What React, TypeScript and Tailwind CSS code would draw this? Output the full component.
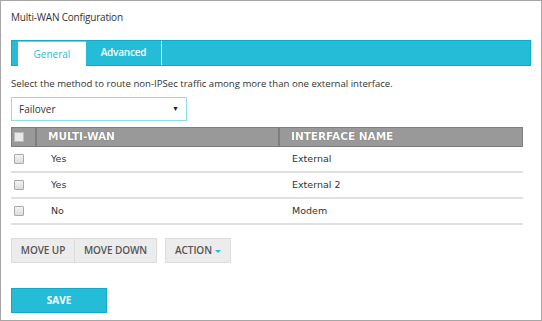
import React from "react";

const Check = ({ header = false }: { header?: boolean }) => (
  <span
    className={
      header
        ? "block w-[10px] h-[10px] border border-[#bbbbbb] bg-[#e8e8e8]"
        : "block w-[10px] h-[10px] rounded-[1px] border border-[#a9a9a9] bg-gradient-to-b from-[#f4f4f4] to-[#dcdcdc]"
    }
  />
);

const rows = [
  ["Yes", "External"],
  ["Yes", "External 2"],
  ["No", "Modem"],
];

export default function App() {
  return (
    <div
      className="w-[542px] h-[321px] border border-[#a6a6a6] bg-white pl-[10px] pr-[10px] text-[#333]"
      style={{ fontFamily: "'Open Sans', sans-serif" }}
    >
      <div className="pt-[10px] h-[39px] text-[10px] tracking-[-0.2px] leading-[13px] text-[#333]">Multi-WAN Configuration</div>
      <div className="flex h-[26px] w-[520px] border border-[#13aac8] bg-[#25bcd7]">
        <div className="ml-[6px] w-[68px] h-[25px] bg-white border-t border-[#6fd3e6] flex items-center justify-center text-[10px] text-[#25bcd7]">
          General
        </div>
        <div className="w-[76px] flex items-center justify-center text-[10px] tracking-[-0.2px] font-semibold text-white border-r border-white pb-[2px]">
          Advanced
        </div>
      </div>
      <div className="mt-[11px] text-[9.6px] leading-[14px] text-[#333]">
        Select the method to route non-IPSec traffic among more than one external interface.
      </div>
      <div className="mt-[6px] w-[176px] h-[24px] border border-[#8fdcea] flex items-center justify-between pl-[7px] pr-[7px] text-[10px] text-[#333]">
        <span>Failover</span>
        <span className="text-[7px] text-[#222]">▼</span>
      </div>
      <div className="mt-[6px] w-[512px]" style={{ fontFamily: "'DejaVu Sans', Verdana, sans-serif" }}>
        <div className="flex h-[20px] bg-[#999999] border border-[#7d7d7d] text-white text-[10.5px] font-bold">
          <div className="w-[25px] flex items-center pl-[2px] border-r-2 border-[#7d7d7d]">
            <Check header />
          </div>
          <div className="w-[243px] flex items-center pl-[11px] border-r-2 border-[#7d7d7d] [text-shadow:0_0_1px_#555]">MULTI-WAN</div>
          <div className="flex-1 flex items-center pl-[11px] [text-shadow:0_0_1px_#555]">INTERFACE NAME</div>
        </div>
        {rows.map(([a, b], i) => (
          <div key={i} className="flex h-[26px] border-b-2 border-[#e0e0e0] text-[9.5px] text-[#333] items-center">
            <div className="w-[26px] pl-[3px] flex items-center">
              <Check />
            </div>
            <div className="w-[243px] pl-[14px]">{a}</div>
            <div className="flex-1 pl-[12px]">{b}</div>
          </div>
        ))}
      </div>
      <div className="mt-[13px] flex h-[25px] text-[10px] tracking-[-0.1px] font-semibold text-[#555]">
        <div className="w-[64px] border border-[#dcdcdc] bg-[#ececec] flex items-center justify-center">MOVE UP</div>
        <div className="w-[82px] border border-l-0 border-[#dcdcdc] bg-[#ececec] flex items-center justify-center">MOVE DOWN</div>
        <div className="ml-[8px] w-[66px] border border-[#dcdcdc] bg-[#ececec] flex items-center justify-center gap-[3px]">
          ACTION
          <span className="inline-block w-0 h-0 border-l-[3px] border-r-[3px] border-t-[3px] border-l-transparent border-r-transparent border-t-[#25bcd7] mt-[2px]" />
        </div>
      </div>
      <div className="mt-[25px] w-[96px] h-[25px] bg-[#25bcd7] border border-[#13aac8] flex items-center justify-center text-[10px] font-bold text-white">
        SAVE
      </div>
    </div>
  );
}
